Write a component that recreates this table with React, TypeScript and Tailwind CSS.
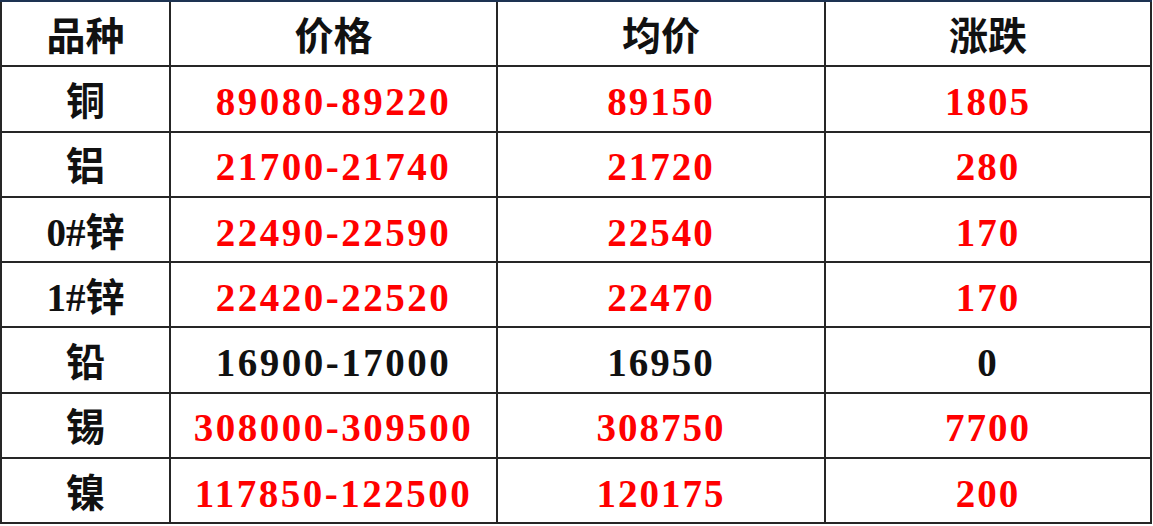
import React from 'react';

const ROWS = [
  { name: '铜', range: '89080-89220', avg: '89150', change: '1805', up: true },
  { name: '铝', range: '21700-21740', avg: '21720', change: '280', up: true },
  { name: '0#锌', range: '22490-22590', avg: '22540', change: '170', up: true },
  { name: '1#锌', range: '22420-22520', avg: '22470', change: '170', up: true },
  { name: '铅', range: '16900-17000', avg: '16950', change: '0', up: false },
  { name: '锡', range: '308000-309500', avg: '308750', change: '7700', up: true },
  { name: '镍', range: '117850-122500', avg: '120175', change: '200', up: true },
];

const HEAD = ['品种', '价格', '均价', '涨跌'];

const cell = 'bg-white flex items-center justify-center pt-[7px] text-[39px]';

export default function App() {
  return (
    <div className="w-[1153px] h-[526px] bg-white font-['Liberation_Serif','Noto_Sans_CJK_SC',serif] font-bold">
      <div className="w-[1152px] h-[524px] grid grid-cols-[167px_325px_326px_324px] grid-rows-[repeat(8,minmax(0,1fr))] gap-[2px] bg-[#262626] border-t-2 border-[#1d3352] px-[2px] pb-[2px]">
        {HEAD.map((h) => (
          <div key={h} className={`${cell} text-[#111]`}>
            {h}
          </div>
        ))}
        {ROWS.map((r) => {
          const color = r.up ? 'text-[#ff0000]' : 'text-[#111]';
          return (
            <React.Fragment key={r.name}>
              <div className={`${cell} text-[#111]`}>{r.name}</div>
              <div className={`${cell} tracking-[2.5px] ${color}`}>{r.range}</div>
              <div className={`${cell} tracking-[2px] ${color}`}>{r.avg}</div>
              <div className={`${cell} tracking-[2px] ${color}`}>{r.change}</div>
            </React.Fragment>
          );
        })}
      </div>
    </div>
  );
}
